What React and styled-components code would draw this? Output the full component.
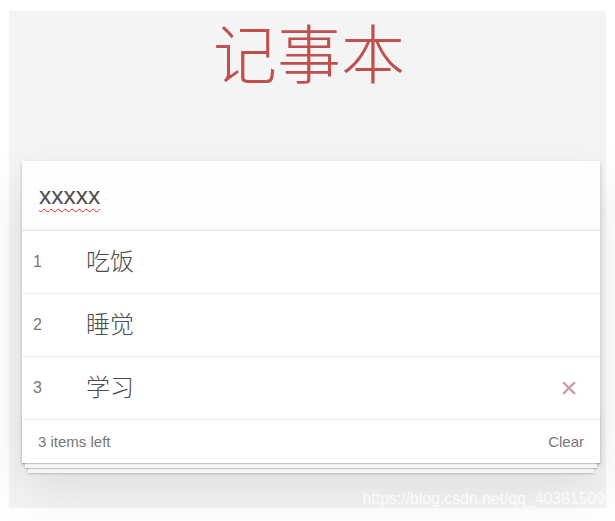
import React, { useState } from "react";
import styled, { createGlobalStyle } from "styled-components";

const GlobalStyle = createGlobalStyle`
  body {
    margin: 0;
    background: #fff;
    font-family: "Liberation Sans", Arial, "Noto Sans CJK SC", sans-serif;
  }
`

const Page = styled.div`
  padding: 11px 9px 13px 9px;
`
const Board = styled.section`
  position: relative;
  background: #f4f4f4;
  height: 497px;
  padding: 0 6px 0 13px;
  box-sizing: border-box;
`
const Title = styled.h1`
  margin: 0;
  height: 150px;
  padding-top: 7px;
  box-sizing: border-box;
  text-align: center;
  font-family: "Noto Sans CJK SC", sans-serif;
  font-weight: 300;
  font-size: 64px;
  line-height: 64px;
  color: #c0504d;
  padding-right: 4px;
`
const Card = styled.div`
  position: relative;
  background: #fff;
  box-shadow: 0 2px 4px 0 rgba(0, 0, 0, 0.2), 0 25px 50px 0 rgba(0, 0, 0, 0.1);
`
const NewTodo = styled.div`
  height: 69px;
  box-sizing: border-box;
  display: flex;
  align-items: center;
  padding: 0 17px;
  background: rgba(0, 0, 0, 0.003);
  box-shadow: inset 0 -2px 1px rgba(0, 0, 0, 0.03);
  font-size: 24.5px;
  color: #4d4d4d;
`
const Typed = styled.span`
  text-decoration: underline wavy #e22;
  text-decoration-thickness: 1px;
  text-underline-offset: 4px;
`
const List = styled.ul`
  margin: 0;
  padding: 0;
  list-style: none;
  border-top: 1px solid #e6e6e6;
`
const Row = styled.li`
  height: 63px;
  box-sizing: border-box;
  display: flex;
  align-items: center;
  border-bottom: 1px solid #ededed;
  padding: 0 20px 0 11px;
`
const Index = styled.span`
  width: 53px;
  font-size: 16px;
  color: #777;
`
const Label = styled.span`
  flex: 1;
  padding-bottom: 6px;
  font-size: 24px;
  font-weight: 300;
  color: #4d4d4d;
`
const Destroy = styled.button`
  border: 0;
  background: none;
  padding: 0;
  width: 22px;
  font-family: "Liberation Sans", Arial, sans-serif;
  font-size: 30px;
  line-height: 1;
  color: #cc9a9a;
  cursor: pointer;
  visibility: ${p => (p.show ? "visible" : "hidden")};
`
const Footer = styled.footer`
  position: relative;
  height: 43px;
  display: flex;
  align-items: center;
  justify-content: space-between;
  padding: 0 16px 0 16px;
  font-size: 15px;
  color: #777;
  &::before {
    content: "";
    position: absolute;
    left: 0;
    right: 0;
    bottom: 0;
    height: 50px;
    overflow: hidden;
    box-shadow: 0 1px 1px rgba(0, 0, 0, 0.2), 0 8px 0 -3px #f6f6f6,
      0 9px 1px -3px rgba(0, 0, 0, 0.2), 0 16px 0 -6px #f6f6f6,
      0 17px 2px -6px rgba(0, 0, 0, 0.2);
  }
`
const FooterText = styled.span`
  position: relative;
`
const Watermark = styled.span`
  position: absolute;
  right: 1px;
  bottom: 0;
  font-size: 15.8px;
  line-height: 18px;
  white-space: nowrap;
  color: rgba(255, 255, 255, 0.85);
`

export default function App() {
  const [todos] = useState(["吃饭", "睡觉", "学习"])
  const [hover] = useState(2)
  return (
    <Page>
      <GlobalStyle />
      <Board>
        <Title>记事本</Title>
        <Card>
          <NewTodo>
            <Typed>xxxxx</Typed>
          </NewTodo>
          <List>
            {todos.map((t, i) => (
              <Row key={t}>
                <Index>{i + 1}</Index>
                <Label>{t}</Label>
                <Destroy show={i === hover}>×</Destroy>
              </Row>
            ))}
          </List>
          <Footer>
            <FooterText>{todos.length} items left</FooterText>
            <FooterText>Clear</FooterText>
          </Footer>
        </Card>
        <Watermark>https://blog.csdn.net/qq_40381509</Watermark>
      </Board>
    </Page>
  )
}
